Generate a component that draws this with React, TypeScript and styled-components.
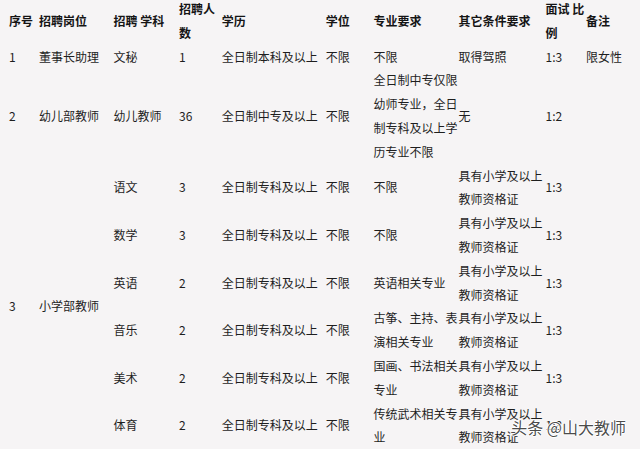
import React from "react"
import styled, { createGlobalStyle } from "styled-components"

const GlobalStyle = createGlobalStyle`
  html,
  body {
    margin: 0;
    padding: 0;
    background: #f6f4f5;
  }

  body {
    font-family: "Noto Sans CJK SC", "Noto Sans", sans-serif;
    color: #1e1e1e;
  }
`

const Page = styled.div`
  position: relative;
  width: 640px;
  height: 449px;
  overflow: hidden;
  padding-left: 9px;
  box-sizing: border-box;
`

const Sheet = styled.table`
  margin-top: -3px;
  width: 631px;
  table-layout: fixed;
  border-collapse: collapse;
  font-size: 12px;
  line-height: 23.8px;
`

const Col = styled.col<{ $w: number }>`
  width: ${({ $w }) => $w}px;
`

const HeadCell = styled.th`
  padding: 0;
  text-align: left;
  vertical-align: middle;
  font-weight: bold;
  color: #151515;
`

const Cell = styled.td`
  padding: 0;
  vertical-align: middle;
  text-align: left;
`

// toutiao style watermark sitting over the bottom right corner
const Watermark = styled.div`
  position: absolute;
  right: 14px;
  bottom: 12px;
  font-size: 16px;
  line-height: 20px;
  color: rgba(50, 50, 50, 0.88);
  text-shadow:
    1px 0 0 #fff,
    -1px 0 0 #fff,
    0 1px 0 #fff,
    0 -1px 0 #fff;
  white-space: nowrap;
`

const columns = [
  { label: "序号", w: 30 },
  { label: "招聘岗位", w: 74.5 },
  { label: "招聘 学科", w: 65.5 },
  { label: "招聘人数", w: 42.7 },
  { label: "学历", w: 104 },
  { label: "学位", w: 47.6 },
  { label: "专业要求", w: 85 },
  { label: "其它条件要求", w: 87 },
  { label: "面试 比例", w: 40.4 },
  { label: "备注", w: 54 },
]

const singleRows = [
  ["1", "董事长助理", "文秘", "1", "全日制本科及以上", "不限", "不限", "取得驾照", "1:3", "限女性"],
  [
    "2",
    "幼儿部教师",
    "幼儿教师",
    "36",
    "全日制中专及以上",
    "不限",
    "全日制中专仅限幼师专业，全日制专科及以上学历专业不限",
    "无",
    "1:2",
    "",
  ],
]

const teacherCert = "具有小学及以上教师资格证"

const primary = {
  no: "3",
  post: "小学部教师",
  subjects: [
    ["语文", "3", "全日制专科及以上", "不限", "不限", teacherCert, "1:3", ""],
    ["数学", "3", "全日制专科及以上", "不限", "不限", teacherCert, "1:3", ""],
    ["英语", "2", "全日制专科及以上", "不限", "英语相关专业", teacherCert, "1:3", ""],
    ["音乐", "2", "全日制专科及以上", "不限", "古筝、主持、表演相关专业", teacherCert, "1:3", ""],
    ["美术", "2", "全日制专科及以上", "不限", "国画、书法相关专业", teacherCert, "1:3", ""],
    ["体育", "2", "全日制专科及以上", "不限", "传统武术相关专业", teacherCert, "1:3", ""],
  ],
}

export default function App() {
  return (
    <Page>
      <GlobalStyle />
      <Sheet>
        <colgroup>
          {columns.map((c) => (
            <Col key={c.label} $w={c.w} />
          ))}
        </colgroup>
        <thead>
          <tr>
            {columns.map((c) => (
              <HeadCell key={c.label}>{c.label}</HeadCell>
            ))}
          </tr>
        </thead>
        <tbody>
          {singleRows.map((row) => (
            <tr key={row[0]}>
              {row.map((v, i) => (
                <Cell key={i}>{v}</Cell>
              ))}
            </tr>
          ))}
          {primary.subjects.map((row, idx) => (
            <tr key={row[0]}>
              {idx === 0 && (
                <>
                  <Cell rowSpan={primary.subjects.length}>{primary.no}</Cell>
                  <Cell rowSpan={primary.subjects.length}>{primary.post}</Cell>
                </>
              )}
              {row.map((v, i) => (
                <Cell key={i}>{v}</Cell>
              ))}
            </tr>
          ))}
        </tbody>
      </Sheet>
      <Watermark>头条 @山大教师</Watermark>
    </Page>
  )
}
